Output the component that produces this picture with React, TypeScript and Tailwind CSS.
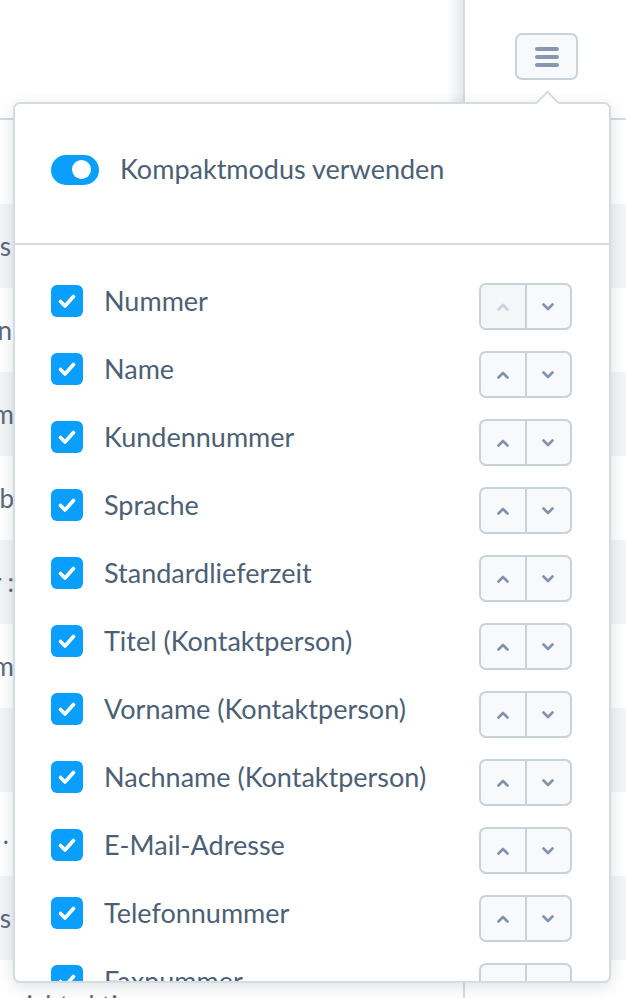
import React from 'react';

const columns = [
  'Nummer',
  'Name',
  'Kundennummer',
  'Sprache',
  'Standardlieferzeit',
  'Titel (Kontaktperson)',
  'Vorname (Kontaktperson)',
  'Nachname (Kontaktperson)',
  'E-Mail-Adresse',
  'Telefonnummer',
  'Faxnummer',
  'Mobilnummer',
];

// clipped cell text behind the popover (only the tail is visible)
const rows = [
  { text: '', pr: 0 },
  { text: 'Status', pr: 3 },
  { text: 'Kunden', pr: 2 },
  { text: 'Lieferzeit im', pr: 0 },
  { text: 'Lieferbetrieb', pr: 0 },
  { text: 'Paket per :', pr: 0 },
  { text: 'Datum', pr: 0 },
  { text: '', pr: 0 },
  { text: 'Info .', pr: 5 },
  { text: 'Ausweis', pr: 3 },
];

function Chevron({ up, disabled }: { up?: boolean; disabled?: boolean }) {
  return (
    <svg viewBox="0 0 12 8" className="w-[12px] h-[8px]" fill="none">
      <path
        d={up ? 'M1.5 6.5 L6 2 L10.5 6.5' : 'M1.5 1.5 L6 6 L10.5 1.5'}
        stroke={disabled ? '#c9d3dc' : '#8193a8'}
        strokeWidth="2.6"
        strokeLinecap="round"
        strokeLinejoin="round"
      />
    </svg>
  );
}

function MoveButtons({ first }: { first?: boolean }) {
  return (
    <div className="mt-[10px] flex w-[93px] h-[47px] rounded-[7px] border-2 border-[#c8d2dc] bg-[#f7f9fb] overflow-hidden">
      <button
        className={`flex-1 flex items-center justify-center pt-[2px] ${first ? 'bg-[#f4f6f8]' : ''}`}
      >
        <Chevron up disabled={first} />
      </button>
      <button className="flex-1 flex items-center justify-center pt-[2px] border-l-2 border-[#c8d2dc]">
        <Chevron />
      </button>
    </div>
  );
}

function Checkbox() {
  return (
    <div className="w-8 h-8 shrink-0 rounded-[6px] bg-[#0a9ffd] flex items-center justify-center">
      <svg viewBox="0 0 32 32" className="w-8 h-8" fill="none">
        <path
          d="M9.5 16.5 L14 21 L22.5 11.5"
          stroke="white"
          strokeWidth="3.6"
          strokeLinecap="round"
          strokeLinejoin="round"
        />
      </svg>
    </div>
  );
}

export default function App() {
  return (
    <div className="relative w-[626px] h-[998px] overflow-hidden bg-white font-['Lato',sans-serif] text-[26px]">
      {/* table header */}
      <div className="flex h-[120px] border-b-2 border-[#d3dce4]">
        <div className="w-[465px] flex border-r-2 border-[#d3dce4]">
          <div className="flex-1" />
          <div className="w-[16px] bg-linear-to-r from-transparent to-[#e6e8eb]" />
        </div>
        <div className="flex-1 pt-[33px] pl-[50px]">
          <button className="w-[63px] h-[47px] rounded-[7px] border-2 border-[#c8d2dc] bg-[#f7f9fb] flex flex-col items-center justify-center gap-[4px]">
            <span className="block w-[24px] h-[4px] rounded-full bg-[#8598ae]" />
            <span className="block w-[24px] h-[4px] rounded-full bg-[#8598ae]" />
            <span className="block w-[24px] h-[4px] rounded-full bg-[#8598ae]" />
          </button>
        </div>
      </div>

      {/* table rows */}
      {rows.map((r, i) => (
        <div key={i} className={`flex h-[84px] ${i % 2 === 1 ? 'bg-[#f2f4f7]' : 'bg-white'}`}>
          <div className="w-[465px] flex border-r-2 border-[#d3dce4]">
            <div
              className="w-[14px] flex items-center justify-end overflow-hidden whitespace-nowrap text-[#5a6a7c]"
              style={{ paddingRight: r.pr }}
            >
              {r.text}
            </div>
            <div className="flex-1" />
            <div className="w-[16px] bg-linear-to-r from-transparent to-[#e6e8eb]" />
          </div>
          <div className="flex-1" />
        </div>
      ))}
      <div className="flex h-[84px] bg-white">
        <div className="w-[465px] flex items-center pl-[12px] pt-[6px] border-r-2 border-[#d3dce4] text-[#5a6a7c] whitespace-nowrap">
          nicht aktiv
        </div>
        <div className="flex-1" />
      </div>

      {/* popover */}
      <div className="absolute left-[13px] top-[102px] w-[598px] h-[881px] rounded-[7px] border-2 border-[#d3dbe3] bg-white shadow-[0_4px_16px_rgba(30,45,60,0.14)]">
        <div className="absolute left-[524px] -top-[10px] w-[17px] h-[17px] rotate-45 bg-white border-l-2 border-t-2 border-[#d3dbe3]" />
        <div className="relative h-full overflow-hidden rounded-[5px] text-[27px]">
          <div className="flex items-center gap-[21px] h-[141px] pl-[36px] pb-[8px] border-b-2 border-[#d3dce4]">
            <div className="w-12 h-[30px] rounded-full bg-[#0a9ffd] flex items-center justify-end pr-[8px]">
              <div className="w-[19px] h-[19px] rounded-full bg-white" />
            </div>
            <span className="text-[#4d5f75]">Kompaktmodus verwenden</span>
          </div>
          <div className="pt-[22px] pl-[36px] pr-[37px]">
            {columns.map((c, i) => (
              <div key={c} className="flex items-center h-[68px]">
                <Checkbox />
                <span className="ml-[21px] flex-1 text-[#4d5f75] whitespace-nowrap">{c}</span>
                <MoveButtons first={i === 0} />
              </div>
            ))}
          </div>
        </div>
      </div>
    </div>
  );
}
